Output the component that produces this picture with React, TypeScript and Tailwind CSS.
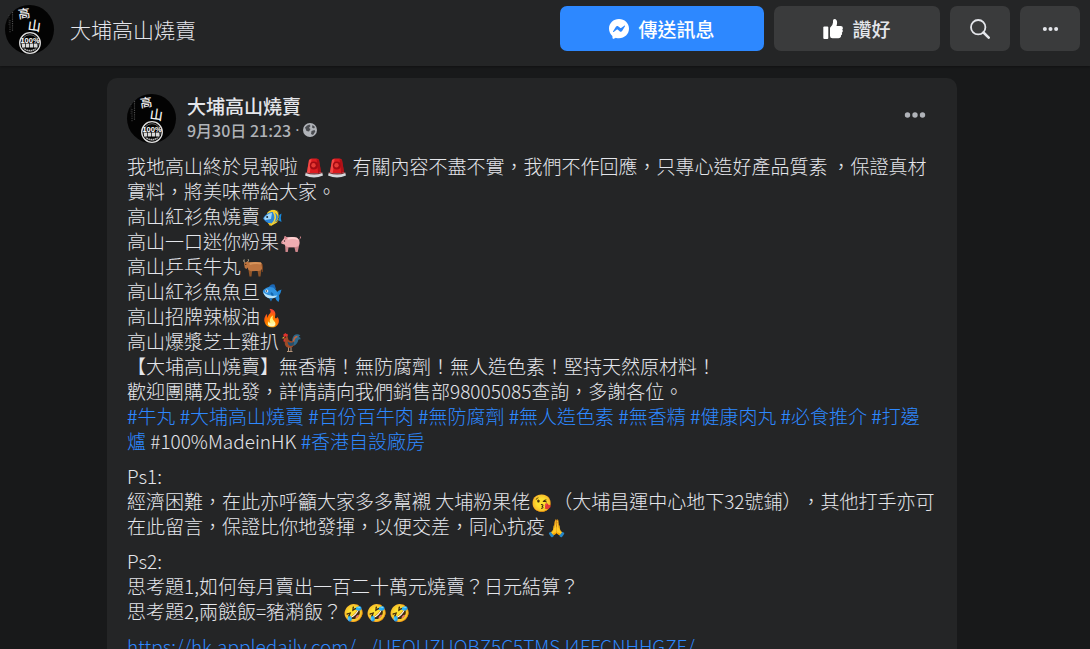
import type { ReactNode } from "react";

function Logo({ label }: { label: string }) {
  return (
    <svg viewBox="0 0 49 49" role="img" aria-label={label} className="size-[49px] shrink-0 overflow-visible">
      <circle cx="24.5" cy="24.5" r="24.5" fill="#030303" />
      <g stroke="#6b6b6b" strokeWidth="1.2" strokeDasharray="1.2 1" fill="none">
        <path d="M7.500 7v19" opacity=".7" />
        <path d="M5 15v13" opacity=".5" />
        <path d="M4 10v10" opacity=".3" />
      </g>
      <g fill="#f1f1f1" fontFamily="'Noto Sans CJK TC', sans-serif" fontWeight="500" textAnchor="middle">
        <text x="19" y="13" fontSize="12" transform="rotate(-8 19 8)">高</text>
        <text x="29.500" y="25.500" fontSize="13" transform="rotate(8 29 20)">山</text>
      </g>
      <circle cx="25" cy="38" r="10.300" fill="none" stroke="#dedede" strokeWidth="1.300" />
      <circle cx="25" cy="38" r="8.300" fill="none" stroke="#8d8d8d" strokeWidth=".7" />
      <text x="25" y="37.500" fontSize="7.500" fontWeight="700" textAnchor="middle" fill="#fff" fontFamily="'Liberation Sans', sans-serif">100%</text>
      <path d="M17 40.500h16" stroke="#d8d8d8" strokeWidth="4" strokeDasharray="3.300 .7" />
      <path d="M19.500 44q5.500 3 11 0" stroke="#bbb" strokeWidth="1.300" fill="none" strokeDasharray="1.500 .6" />
    </svg>
  );
}

function Drawing({ label, children }: { label: string; children: ReactNode }) {
  return (
    <span className="inline-flex h-5 w-[23px] justify-center align-[-4px]">
      <svg viewBox="0 0 20 20" role="img" aria-label={label} className="size-5">
        {children}
      </svg>
    </span>
  );
}

function Emoji({ children }: { children: string }) {
  return (
    <span className="inline-flex h-5 w-[23px] items-center justify-center text-[17px] leading-5 font-normal">
      {children}
    </span>
  );
}

function Siren() {
  return (
    <Drawing label="警號燈">
      <path d="M5 2Q5.500.5 7.500.5h5Q14.500.5 15 2l2.200 13H2.800z" fill="#dc1c20" />
      <path d="M5 2L2.800 15h3L7.500 1z" fill="#ff5b55" opacity=".7" />
      <path d="M12.500 1l1.700 14h3L15 2z" fill="#9c0b12" opacity=".7" />
      <circle cx="9.800" cy="7.500" r="4" fill="#a30b12" />
      <circle cx="9.500" cy="7.300" r="2.200" fill="#e53a34" />
      <path d="M2 14q8 3 16 0l1 3.500q-9 4-18 0z" fill="#d4d9dc" />
      <path d="M2 14q8 3 16 0l.3 1q-8 3-16.600 0z" fill="#7b1b20" />
    </Drawing>
  );
}

function TropicalFish() {
  return (
    <Drawing label="熱帶魚">
      <path d="M14 9l5.500-3.500q-1.200 4 0 8.500L14 11z" fill="#1789dd" />
      <path d="M5 5Q9-.5 16 3q2.500 7-1 11.500L9 18l-3-3z" fill="#f7cf2c" />
      <path d="M1 10.500Q5 3.500 11 4q6 2 4.500 7-2.500 4.500-8 4.500-3-.5-6.500-5z" fill="#2b86d8" />
      <path d="M2 10Q6 5 10 5l-1 6-6 1z" fill="#9fd4f7" />
      <path d="M11.500 4q4 6-1 11.500" stroke="#f5d43a" strokeWidth="1.500" fill="none" />
      <path d="M7 2.500Q13-.5 16 4q2.500 6-1.500 10" stroke="#26333b" strokeWidth=".7" fill="none" />
      <circle cx="5.200" cy="9" r="1" fill="#172836" />
      <path d="M6 15l2 3 1-2.500z" fill="#f0bd19" />
    </Drawing>
  );
}

function Pig() {
  return (
    <Drawing label="豬">
      <path d="M4 11l.5 8h2.300l.7-4.500h6l1 4.500h2.200l1.500-7z" fill="#cd858b" />
      <path d="M3 5.500L3.800 3l2.700 1.500Q12 3.200 16 4.800q3.500 2.200 2.300 7-1 2.200-3.800 2.200H7Q4.500 13.500 3.500 11.500L.6 10.800q-.8-1.600.2-2.600z" fill="#f0adb1" />
      <path d="M6 4.500Q12 3.200 16 4.800l1.800 2.500q-6-2.300-11-.6z" fill="#ffd0d0" />
      <path d="M3.500 3l.8 4 2.500-2z" fill="#d87f88" />
      <path d="M18.500 6q2-1 .8-2.500" stroke="#e18e95" fill="none" />
      <circle cx="3.500" cy="8" r=".7" fill="#3b2529" />
      <circle cx="1.200" cy="9.700" r=".5" fill="#a35660" />
    </Drawing>
  );
}

function Ox() {
  return (
    <Drawing label="牛">
      <path d="M5 9l1.500 9.500h2l.7-6h5.300l1 6h2L19 7z" fill="#8f5428" />
      <path d="M2 4.500l2.500-1L6 4.500q7-1 12 0 2 2 1 6.500-1.500 2.500-4 2l-7 .2Q5 12.500 4.500 9.500l-1 1.500-1.700-1L1 5.500z" fill="#bd7540" />
      <path d="M6 4.500q7-1 12 0l.5 2Q12 5.500 7 7z" fill="#d6935a" />
      <path d="M1.500 4.500Q.3 3 1.200 1.500M4.800 3.800Q6 2.500 5.200 1.300" stroke="#e0cfae" strokeWidth=".9" fill="none" />
      <path d="M19 6q1 4 .3 8" stroke="#7c441f" fill="none" />
      <circle cx="2.800" cy="6.300" r=".6" fill="#24150d" />
    </Drawing>
  );
}

function Fish() {
  return (
    <Drawing label="魚">
      <path d="M6 5Q9 0 12.500 1.500L14 6z" fill="#1b67b5" />
      <path d="M14 10q2-3 5.500-3.500Q19 10 17 12.500q1 3-.5 6.500-3-2-3.500-5z" fill="#2286d6" />
      <path d="M.7 8Q5 2.500 11 4.500q4.500 2.500 5 7.500-3 4-8 3.500Q2.500 14.500.7 8z" fill="#2f91df" />
      <path d="M1 9q6 5 14.500 3.500-3 3.500-8 3Q2.500 14 1 9z" fill="#b8e2f8" />
      <path d="M9 9q3 1 2.500 4-2.500 0-3-2.500z" fill="#1568ae" />
      <path d="M7 15l2 3.500 1.500-3z" fill="#1b72bd" />
      <circle cx="4.800" cy="8" r="1.500" fill="#fff" />
      <circle cx="4.600" cy="8" r=".8" fill="#17283a" />
    </Drawing>
  );
}

function Rooster() {
  return (
    <Drawing label="公雞">
      <path d="M11 9q0-6 3.500-7.500Q17 .5 19.500 2.500q-1.800.2-1.500 1.500 2 .3 1.500 2.500-1.500-.8-2.200.5Q16.500 11 12.500 13z" fill="#2f6a8c" />
      <path d="M12.500 9q.3-5 4-5.500" stroke="#c9643c" strokeWidth="1.500" fill="none" />
      <path d="M3.500 3q2-1.500 3 .5l1 3.500q2.500 2 5 1 1.500 3-1 6-3 2-6 0-2.500-2.500-1.500-6z" fill="#a14a26" />
      <path d="M6.500 8.500q3.500 2.500 6.500 0 .5 4.500-3.500 4.500Q7 12.500 6.500 8.500z" fill="#23506d" />
      <path d="M3 4Q1.500.5 3.500 1 4-.8 5.200 1 7.200 0 6.700 3.300zM3 5.500q-1.200 3 .3 3.500 1.500-1 .8-3.500z" fill="#e1322d" />
      <path d="M3.200 3.500L.7 5.200 3.200 5.500z" fill="#e9b23e" />
      <path d="M7.500 14.500v4M10 14.500v4M6 18.500h5.500" stroke="#b8977c" strokeWidth="1" />
      <circle cx="4.500" cy="4" r=".6" fill="#14100e" />
    </Drawing>
  );
}

function Dots({ className }: { className: string }) {
  return (
    <svg viewBox="0 0 22 8" fill="currentColor" aria-hidden="true" className={className}>
      <circle cx="3.500" cy="4" r="2.700" />
      <circle cx="11" cy="4" r="2.700" />
      <circle cx="18.500" cy="4" r="2.700" />
    </svg>
  );
}

function Tag({ children }: { children: string }) {
  return (
    <a href="#tag" className="text-[#2d88ff]">
      <span className="font-[350]">#</span>
      {children}
    </a>
  );
}

const PAGE = "大埔高山燒賣";

export default function App() {
  return (
    <div className="flex h-screen flex-col overflow-hidden bg-[#18191a] font-['Noto_Sans_CJK_TC',sans-serif] text-[#e4e6eb]">
      <header className="z-10 flex shrink-0 items-start justify-between bg-[#242526] pt-[5px] pr-[10px] pb-3 pl-[5px] shadow-[0_1px_2px_rgba(0,0,0,0.3)]">
        <a href="#page" className="flex h-[49px] items-center gap-4">
          <Logo label="專頁標誌" />
          <span className="pb-0.5 text-[21px] leading-6 font-light">{PAGE}</span>
        </a>
        <div className="flex gap-[10px] pt-px text-[19px] font-medium">
          <button className="flex h-[45px] w-[204px] items-center justify-center gap-[9px] rounded-[7px] bg-[#2d88ff] text-white">
            <svg viewBox="0 0 20 20" aria-hidden="true" className="size-5">
              <path fill="#fff" d="M10 0C4.400 0 0 4.100 0 9.600c0 2.900 1.200 5.400 3.100 7.100.2.100.3.400.3.600l.1 1.800c0 .6.600 1 1.100.7l2-.9c.2-.1.400-.1.500 0 .9.200 1.900.4 2.900.4 5.600 0 10-4.100 10-9.700C20 4.100 15.600 0 10 0z" />
              <path fill="#2d88ff" d="M4 12.400l2.900-4.700c.5-.7 1.500-.9 2.200-.4l2.300 1.800c.2.100.5.100.7 0l3.200-2.400c.4-.3 1 .2.700.6l-2.900 4.700c-.5.7-1.500.9-2.200.4l-2.300-1.800c-.2-.1-.5-.1-.7 0L4.700 13c-.4.300-.9-.2-.7-.6z" />
            </svg>
            <span className="pt-0.5">傳送訊息</span>
          </button>
          <button className="flex h-[45px] w-[166px] items-center justify-center gap-[9px] rounded-[7px] bg-[#3a3b3c]">
            <svg viewBox="0 0 20 20" fill="#fff" aria-hidden="true" className="size-5">
              <rect x=".3" y="7.500" width="5" height="12.500" rx="1" />
              <path d="M7 9.500q0-1 .8-1.700Q9.800 6 10 3.500V1.800Q10 0 11.500 0q2.500.3 2.600 3.500 0 1.500-.6 3.500h4.300q2 .2 2.100 2 0 1-.7 1.600.9.800.4 2.200-.2.600-.8 1 .5.800.1 1.800-.3.700-1 1 .2.600 0 1.200-.5 1.400-2.400 1.500H9.500Q7 19.200 7 17z" />
            </svg>
            <span className="pt-0.5">讚好</span>
          </button>
          <button aria-label="搜尋" className="flex h-[45px] w-[60px] items-center justify-center rounded-[7px] bg-[#3a3b3c]">
            <svg viewBox="0 0 20 20" fill="none" stroke="#e4e6eb" aria-hidden="true" className="size-5">
              <circle cx="8.200" cy="8.200" r="7.200" strokeWidth="1.800" />
              <path d="M13.500 13.500l5.200 5.200" strokeWidth="2.500" strokeLinecap="round" />
            </svg>
          </button>
          <button aria-label="更多選項" className="flex h-[45px] w-[60px] items-center justify-center rounded-[7px] bg-[#3a3b3c]">
            <Dots className="h-[6px] w-[17px]" />
          </button>
        </div>
      </header>

      <main className="pt-3 pr-[26px]">
        <article className="mx-auto max-w-[850px] rounded-[10px] bg-[#242526] px-5 pt-4 pb-5">
          <div className="flex items-start">
            <Logo label="發文者標誌" />
            <div className="ml-[11px] flex-1">
              <h2 className="text-[19px] leading-6 font-medium">{PAGE}</h2>
              <p className="flex items-center gap-1 text-base leading-6 font-medium text-[#b0b3b8]">
                <span>9月30日 21:23</span>
                <span className="font-['Open_Sans']">·</span>
                <svg viewBox="0 0 14 14" aria-label="公開" role="img" className="size-[14px]">
                  <circle cx="7" cy="7" r="7" fill="#b0b3b8" />
                  <path d="M2 4.500q2-2.500 4.500-3l1 1.500-1.500 2 1.500 1L6 8.500 3.500 8zM8.500 8l3-1 .8 1.500-2.300 3.500-2-1zM9.500 2l2.500 2-1 1.500-2-1z" fill="#4a4c50" />
                </svg>
              </p>
            </div>
            <button aria-label="貼文選項" className="mt-[17px] mr-[11px] text-[#b0b3b8]">
              <Dots className="h-2 w-[22px]" />
            </button>
          </div>

          <div className="mt-[10px] flex flex-col gap-[10px] text-[19px] leading-[25px] font-light break-words [text-spacing-trim:space-all]">
            <p>
              我地高山終於見報啦 <Siren />
              <Siren /> 有關內容不盡不實，我們不作回應，只專心造好產品質素 ，保證真材實料，將美味帶給大家。
              <br />
              高山紅衫魚燒賣
              <TropicalFish />
              <br />
              高山一口迷你粉果
              <Pig />
              <br />
              高山乒乓牛丸
              <Ox />
              <br />
              高山紅衫魚魚旦
              <Fish />
              <br />
              高山招牌辣椒油
              <Emoji>🔥</Emoji>
              <br />
              高山爆漿芝士雞扒
              <Rooster />
              <br />
              【大埔高山燒賣】無香精！無防腐劑！無人造色素！堅持天然原材料！
              <br />
              歡迎團購及批發，詳情請向我們銷售部98005085查詢，多謝各位。
              <br />
              <Tag>牛丸</Tag> <Tag>大埔高山燒賣</Tag> <Tag>百份百牛肉</Tag> <Tag>無防腐劑</Tag>{" "}
              <Tag>無人造色素</Tag> <Tag>無香精</Tag> <Tag>健康肉丸</Tag> <Tag>必食推介</Tag>{" "}
              <Tag>打邊爐</Tag> #100%MadeinHK <Tag>香港自設廠房</Tag>
            </p>
            <p>
              Ps1:
              <br />
              經濟困難，在此亦呼籲大家多多幫襯 大埔粉果佬
              <Emoji>😘</Emoji>
              （大埔昌運中心地下32號鋪），其他打手亦可在此留言，保證比你地發揮，以便交差，同心抗疫
              <Emoji>🙏</Emoji>
            </p>
            <p>
              Ps2:
              <br />
              思考題1,如何每月賣出一百二十萬元燒賣？日元結算？
              <br />
              思考題2,兩餸飯=豬潲飯？
              <Emoji>🤣</Emoji>
              <Emoji>🤣</Emoji>
              <Emoji>🤣</Emoji>
            </p>
            <p>
              <a href="#article" className="text-[#2d88ff]">
                https://hk.appledaily.com/.../UEQUZUQBZ5C5TMSJ4FFCNHHGZE/
              </a>
            </p>
          </div>
        </article>
      </main>
    </div>
  );
}
